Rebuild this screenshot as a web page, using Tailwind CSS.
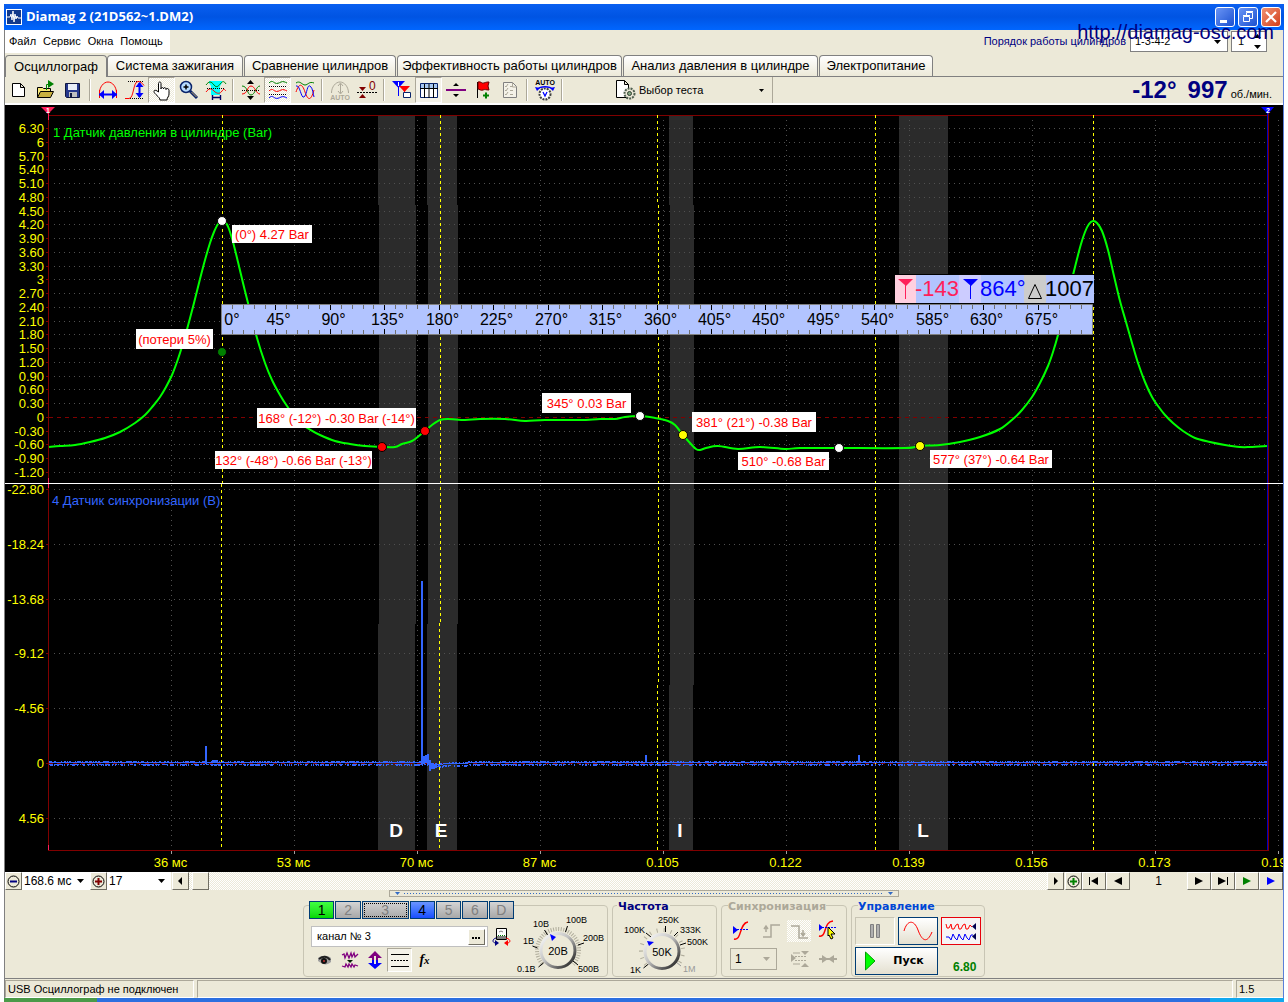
<!DOCTYPE html>
<html lang="ru">
<head>
<meta charset="utf-8">
<title>Diamag 2</title>
<script src="https://cdn.jsdelivr.net/npm/@tailwindcss/browser@4"></script>
</head>
<body class="bg-white px-1 pt-1 font-['Liberation_Sans',Arial,sans-serif] text-black overflow-x-hidden">
<div class="relative">

<!-- Title bar -->
<header class="flex h-[26px] items-center bg-linear-to-b from-[#0a5ff0] via-[#0054e3] to-[#0066ff] pl-0.5 pr-[3px]">
  <svg class="size-4" viewBox="0 0 16 16"><rect width="16" height="16" fill="#fff"/><rect x="1" y="1" width="14" height="14" fill="#123a8c"/><path d="M1 8h3l1-3 1 6 1-9 1 11 1-8 1 5 1-3 1 2h3" fill="none" stroke="#fff"/></svg>
  <h1 class="ml-1 flex-1 font-['Open_Sans','Noto_Sans',sans-serif] text-[13px] font-bold text-white">Diamag 2 (21D562~1.DM2)</h1>
  <div class="flex gap-[3px]">
    <button aria-label="Свернуть" class="size-5 rounded-[3px] border border-white bg-linear-to-br from-[#6a94f5] to-[#1a4fd0]"><svg viewBox="0 0 18 18"><path d="M4 12h7v3H4z" fill="#fff"/></svg></button>
    <button aria-label="Восстановить" class="size-5 rounded-[3px] border border-white bg-linear-to-br from-[#6a94f5] to-[#1a4fd0]"><svg viewBox="0 0 18 18" fill="none" stroke="#fff"><path d="M4.500 8.500h6v5h-6zM4 7.500h7M7.500 7V4.500h6v6H11M7 3.500h7"/></svg></button>
    <button aria-label="Закрыть" class="size-5 rounded-[3px] border border-white bg-linear-to-br from-[#f09070] to-[#d23c14]"><svg viewBox="0 0 18 18"><path d="M4 4l10 10M14 4L4 14" stroke="#fff" stroke-width="2.200"/></svg></button>
  </div>
</header>
<a href="#" class="absolute right-[10px] top-4 z-10 text-xl leading-6 text-[#000080]">http://diamag-osc.com</a>

<div class="border-x border-l-[#808080] border-r-[#5a7fd8] bg-[#ece9d8]">
<!-- Menu row -->
<div class="flex h-[25px] items-start justify-between">
  <nav class="flex h-[23px] w-[165px] items-center gap-[7px] bg-white pl-1 text-[11px]">
    <a href="#">Файл</a><a href="#">Сервис</a><a href="#">Окна</a><a href="#">Помощь</a>
  </nav>
  <div class="flex items-center pr-4 pt-px text-[11px]">
    <label for="order" class="mr-1 text-[#000080]">Порядок работы цилиндров</label>
    <span class="grid h-[21px] w-[98px] border border-[#808080] bg-white">
      <select id="order" class="appearance-none px-1 [grid-area:1/1]"><option>1-3-4-2</option></select>
      <svg class="pointer-events-none mr-1.5 h-1 w-[7px] self-center justify-self-end [grid-area:1/1]" viewBox="0 0 7 4"><path d="M0 0h7L3.500 4z"/></svg>
    </span>
    <span class="ml-[3px] flex h-[21px] w-9 items-center border border-[#808080] bg-white pl-1.5">
      <input aria-label="Цилиндр" value="1" class="w-3">
      <svg class="ml-1 h-[17px] w-[7px]" viewBox="0 0 7 17"><path d="M0 5h7L3.500 1zM0 12h7L3.500 16z"/></svg>
    </span>
  </div>
</div>

<!-- Tabs -->
<div role="tablist" class="flex h-[21px] text-[13px] leading-5">
  <button role="tab" aria-selected="true" class="z-10 -mb-px w-[102px] rounded-t border border-b-0 border-[#808080] bg-[#ece9d8]">Осциллограф</button>
  <button role="tab" class="w-[136px] rounded-t border border-b-0 border-[#808080] bg-linear-to-b from-white to-[#ece9d8]">Система зажигания</button>
  <button role="tab" class="ml-px w-[152px] rounded-t border border-b-0 border-[#808080] bg-linear-to-b from-white to-[#ece9d8]">Сравнение цилиндров</button>
  <button role="tab" class="ml-px w-[225px] rounded-t border border-b-0 border-[#808080] bg-linear-to-b from-white to-[#ece9d8]">Эффективность работы цилиндров</button>
  <button role="tab" class="ml-px w-[195px] rounded-t border border-b-0 border-[#808080] bg-linear-to-b from-white to-[#ece9d8]">Анализ давления в цилиндре</button>
  <button role="tab" class="ml-px w-[114px] rounded-t border border-b-0 border-[#808080] bg-linear-to-b from-white to-[#ece9d8]">Электропитание</button>
</div>

<!-- Toolbar -->
<div class="flex h-[29px] items-center border-b-2 border-t border-b-white border-t-[#808080]">
  <div class="flex items-center [&_svg]:mx-auto [&_svg]:size-6">
  <button aria-label="Новый" class="h-[26px] w-[27px]"><svg viewBox="0 0 24 24"><path d="M5.500 5.500h8l4 4v9h-12zM13.500 5.500v4h4" fill="#fff" stroke="#000"/></svg></button>
  <button aria-label="Открыть" class="h-[26px] w-[27px]"><svg viewBox="0 0 24 24"><path d="M3.500 19.500v-10h5l1 1h7v3" fill="#f8e878" stroke="#000"/><path d="M3.500 19.500l3-6h13l-3 6z" fill="#c8b040" stroke="#000"/><path d="M14 2v8l6-4z" fill="#008000"/><path d="M12.500 12V6.500H14" fill="none" stroke="#008000"/></svg></button>
  <button aria-label="Сохранить" class="h-[26px] w-[27px]"><svg viewBox="0 0 24 24"><path d="M4.500 5.500h14v14h-13l-1-1z" fill="#26388c" stroke="#101840"/><path d="M7 6h9v6H7z" fill="#e8eef8"/><path d="M8 14h8v5H8z" fill="#c0c0c0"/><path d="M9 15h2v4H9z" fill="#101840"/></svg></button>
  <i class="mx-[3px] h-[22px] w-0.5 border-l border-[#aca899] bg-white"></i>
  <button aria-label="Период" class="h-[26px] w-[27px]"><svg viewBox="0 0 24 24" fill="none"><path d="M3.500 15c0-6 4-11 8.500-11s8.500 5 8.500 11" stroke="red"/><path d="M3.500 12v8M20.500 12v8" stroke="red"/><path d="M3 16.500h18" stroke="#00f" stroke-width="2"/><path d="M8 12v9l-5-4.500zM16 12v9l5-4.500z" fill="#00f"/></svg></button>
  <button aria-label="Размах" class="h-[26px] w-[27px]"><svg viewBox="0 0 24 24" fill="none"><path d="M5 3.500h16M5 20.500h16" stroke="#000" stroke-dasharray="1 1"/><path d="M2 20.500h4c5 0 4-17 9-17 2 0 4 1 6 4" stroke="red"/><path d="M16.500 5v14" stroke="#00f" stroke-width="2"/><path d="M12.500 9l4-5 4 5zM12.500 15l4 5 4-5z" fill="#00f"/></svg></button>
  <button aria-label="Рука" class="h-[26px] w-[27px] border border-[#aca899] border-b-white border-r-white bg-[repeating-conic-gradient(#fff_0_25%,#ece9d8_0_50%)] bg-[length:2px_2px]"><svg viewBox="0 0 24 24"><path d="M8.500 14V5.500c0-2 2.500-2 2.500 0V11c0-2 2.500-2 2.500 0 0-2 2.500-2 2.500 .500 0-1.500 3-1.500 3 1V16c0 3-2 3-2 6H10c0-3-6-6-6-8.500 0-1.500 1.500-2 4.500.500z" fill="#fff" stroke="#000"/></svg></button>
  <button aria-label="Лупа" class="h-[26px] w-[27px]"><svg viewBox="0 0 24 24"><circle cx="9" cy="9" r="5.500" fill="#b8dcff" stroke="#0a246a" stroke-width="1.500"/><path d="M6.500 9h5M9 6.500v5" stroke="#000" stroke-width="1.500"/><path d="M13 13l7 7" stroke="#0a246a" stroke-width="3"/><path d="M14.500 14l5 5" stroke="#c8a868"/></svg></button>
  <button aria-label="Выделение" class="h-[26px] w-[27px]"><svg viewBox="0 0 24 24" fill="none"><path d="M5 3h13v2l-2 3v9H7V8L5 5z" fill="#0ff"/><path d="M2 7c3-4 5-4 8 0s5 0 7-2 3-2 5 1" stroke="green"/><path d="M2 14c3-4 5-4 8-1s6 3 8 0 3-1 4 0" stroke="red"/><path d="M3 10.500h18" stroke="#000" stroke-dasharray="1 1"/><path d="M8 19.500h9M8.500 17v5M16.500 17v5" stroke="#006" stroke-width="1.400"/></svg></button>
  <i class="mx-[3px] h-[22px] w-0.5 border-l border-[#aca899] bg-white"></i>
  <button aria-label="Совместить" class="h-[26px] w-[27px]"><svg viewBox="0 0 24 24" fill="none"><path d="M3 8c6 0 5 9 9 9s5-9 9-9" stroke="green"/><path d="M3 16c6 0 5-8 9-8s5 8 9 8" stroke="red"/><path d="M3 12.500h18" stroke="#000" stroke-dasharray="1 1"/><path d="M8 6h7l-3.500-4zM8 18h7l-3.500 4z" fill="#000"/></svg></button>
  <button aria-label="Разнести" class="h-[26px] w-[27px] border border-[#aca899] border-b-white border-r-white bg-[repeating-conic-gradient(#fff_0_25%,#ece9d8_0_50%)] bg-[length:2px_2px]"><svg viewBox="0 0 24 24" fill="none"><path d="M3 5c3-3 4-1 6 0s4 0 6-1 4 0 6 1" stroke="green"/><path d="M3 13c3-3 4-1 6 0s4 0 6-1 4 0 6 1" stroke="red"/><path d="M3 20c3-3 4-1 6 0s4 0 6-1 4 0 6 1" stroke="#00f"/><path d="M3 8.500h18M3 16.500h18" stroke="#000" stroke-dasharray="1 1"/></svg></button>
  <button aria-label="Наложить" class="h-[26px] w-[27px]"><svg viewBox="0 0 24 24" fill="none"><path d="M3 5c4-3 6 2 9 2s4-4 9-2" stroke="green"/><path d="M3 14c3-9 6-9 9 0s6 9 9-2" stroke="red"/><path d="M3 8c4-2 5 13 8 11s3-13 6-11 3 8 4 11" stroke="#00f"/></svg></button>
  <i class="mx-[3px] h-[22px] w-0.5 border-l border-[#aca899] bg-white"></i>
  <button aria-label="Авто" class="h-[26px] w-[27px]"><svg viewBox="0 0 24 24" fill="none" stroke="#aca899"><path d="M3.500 15c0-6 4-11 8.500-11s8.500 5 8.500 11M12.500 6v9M10 8l2.500-3L15 8M10 13l2.500 3 2.500-3"/><text x="12" y="22" text-anchor="middle" font-size="7" font-weight="bold" fill="#aca899" stroke="none">AUTO</text></svg></button>
  <button aria-label="Ноль" class="h-[26px] w-[27px]"><svg viewBox="0 0 24 24"><path d="M4 9h7l-3.500 4zM4 20h7l-3.500-4z" fill="#800000"/><path d="M2 14.500h20" stroke="#000" stroke-dasharray="2 1"/><text x="14" y="12" font-size="12" fill="#800000">0</text></svg></button>
  <i class="mx-[3px] h-[22px] w-0.5 border-l border-[#aca899] bg-white"></i>
  <button aria-label="Маркеры" class="h-[26px] w-[27px]"><svg viewBox="0 0 24 24"><path d="M2 3h13L8.500 10z" fill="#00f"/><path d="M8.500 8v10" stroke="#00f"/><path d="M9 8h11l-5.500 6z" fill="red"/><path d="M14.500 12v8" stroke="red"/><path d="M13.500 14.500h7v5h-7z" fill="#fff" stroke="#0a246a"/><path d="M8 4h1v4H8z" fill="#fff"/></svg></button>
  <button aria-label="Таблица" class="h-[26px] w-[27px] border border-[#aca899] border-b-white border-r-white bg-[#f4f2e8]"><svg viewBox="0 0 24 24"><path d="M3.500 5.500h17v14h-17z" fill="#fff" stroke="#0a246a"/><path d="M4 6h16v4H4z" fill="#a8c8f0"/><path d="M3 10.500h18M7.500 6v14M12 6v14M16.500 6v14" stroke="#000"/></svg></button>
  <button aria-label="Разделить" class="h-[26px] w-[27px]"><svg viewBox="0 0 24 24"><path d="M2 12h20" stroke="#800080" stroke-width="2"/><path d="M9 8h6l-3-3zM9 16h6l-3 3z"/></svg></button>
  <button aria-label="Флаг" class="h-[26px] w-[27px]"><svg viewBox="0 0 24 24"><path d="M6.500 4v16" stroke="#000"/><path d="M7 4c3-1 4 2 6 1s4-1 5-1l-1 4 1 4c-3 0-4-1-6 0s-4-1-5-1z" fill="red" stroke="#600"/><path d="M12 17.500h6M15 14.500v6" stroke="green" stroke-width="2"/></svg></button>
  <button aria-label="Список" class="h-[26px] w-[27px]"><svg viewBox="0 0 24 24"><path d="M5.500 4.500h9l4 4v11h-13z" fill="#f4f2e8" stroke="#808080"/><path d="M7 8l1 1 2-3M7 12l1 1 2-3M7 16l1 1 2-3M12 8.500h3M12 12.500h3M12 16.500h3M14.500 5v4h4" fill="none" stroke="#aca899"/></svg></button>
  <i class="mx-[3px] h-[22px] w-0.5 border-l border-[#aca899] bg-white"></i>
  <button aria-label="Автонапряжение" class="h-[26px] w-[27px]"><svg viewBox="0 0 24 24"><text x="12" y="7" text-anchor="middle" font-size="7" font-weight="bold">AUTO</text><circle cx="12" cy="16" r="5.500" fill="#fff" stroke="#404040" stroke-width="2" stroke-dasharray="2 1"/><path d="M5 11c2-3 12-3 14 0" fill="none" stroke="#00f" stroke-width="1.300"/><path d="M2 9l2 4 3-3zM22 9l-2 4-3-3z" fill="#00f"/><path d="M10 14l2 4 2-4" fill="none" stroke="#00f" stroke-width="1.300"/></svg></button>
  <i class="mx-[3px] h-[22px] w-0.5 border-l border-[#aca899] bg-white"></i>
  </div>
  <button class="ml-[49px] flex h-[26px] w-[158px] items-center border-r border-[#aca899] text-left text-[11px]">
    <svg class="size-6 shrink-0" viewBox="0 0 24 24"><path d="M1.500 2.500h8l4 4v13h-12zM9.500 2.500v4h4" fill="#fff" stroke="#000"/><circle cx="14.500" cy="15.500" r="5" fill="#ece9d8" stroke="#506050" stroke-width="2" stroke-dasharray="2 1"/><circle cx="14.500" cy="15.500" r="2" fill="#84a884" stroke="#304030"/></svg>
    <span class="flex-1">Выбор теста</span>
    <svg class="mr-2 h-[3px] w-[5px]" viewBox="0 0 5 3"><path d="M0 0h5L2.500 3z"/></svg>
  </button>
  <div class="ml-auto flex items-baseline pr-[11px] font-bold text-[#000080]">
    <output class="text-2xl leading-6">-12°</output>
    <output class="ml-[11px] text-2xl leading-6">997</output>
    <span class="ml-[3px] text-[11px] font-normal text-black">об./мин.</span>
  </div>
</div>

<!-- Oscillogram -->
<svg id="scope" class="block w-full bg-black" viewBox="5 105 1278 767" font-size="13">
  <g fill="#2b2b2b">
    <path d="M378 116h37v89h1v419h-1v226h-37V624h1V205h-1zM427 116h30v89h1v419h-1v226h-30V624h1V205h-1zM669 116h24v89h1v480h-1v165h-24V685h1V205h-1zM899 116h49v734h-49z"/>
  </g>
  <g id="grid" stroke="#505050"></g>
  <g stroke="#800000"><path d="M49 417.500H1267M49 763.500H1267" stroke-dasharray="4 4"/><path d="M48 115.500H1269M48 850.500H1269M48.500 110V851M1268.500 110V851" id="frame" stroke-width="1"/></g>
  <path d="M1267.500 112V850" stroke="#0000c0"/>
  <path d="M48.500 112v8M48.500 478v10M48.500 845v5" stroke="#ff1f5a"/>
  <path d="M41 107h14l-7 7z" fill="#ff1f5a"/><path d="M1261 107h13l-6 7z" fill="#00f"/>
  <text x="48" y="113" font-size="7" font-weight="bold" text-anchor="middle" fill="#fff">1</text>
  <text x="1268" y="113" font-size="7" font-weight="bold" text-anchor="middle" fill="#fff">2</text>
  <g font-size="19" font-weight="bold" fill="#fff" text-anchor="middle"><text x="396" y="837">D</text><text x="441" y="837">E</text><text x="680" y="837">I</text><text x="923" y="837">L</text></g>
  <path d="M222.500 115v368M221.500 484v366M440.500 115v508M439.500 623v227M658.500 205v480M657.500 115v90M657.500 685v165M875.500 115v735M1093.500 115v735" stroke="#ff0" stroke-dasharray="3 3"/>
  <path d="M5 483.500H1283" stroke="#fff"/>
  <g id="yaxis" fill="#ff0" text-anchor="end"></g>
  <g id="xaxis" fill="#ff0" text-anchor="middle"></g>
  <text x="53" y="137" fill="#0f0">1 Датчик давления в цилиндре (Bar)</text>
  <text x="52" y="505" fill="#36f">4 Датчик синхронизации (В)</text>
  <path id="sync" fill="none" stroke="#36f"/>
  <path id="pulses" fill="none" stroke="#36f" stroke-width="2"/>
  <path id="pressure" fill="none" stroke="#0f0" stroke-width="2"/>
  <g id="dots" stroke="#000"></g>
  <g id="notes" text-anchor="middle"></g>
  <path d="M221.500 304.500h871v30h-871z" fill="#b2c4ff" stroke="#808080"/>
  <path id="minor" stroke="#707070"/><path id="major" stroke="#000"/>
  <g id="degrees" font-size="16" text-anchor="middle"></g>
  <!-- Cursor readout -->
  <path d="M894 274h200v30H894z"/><path d="M895 275h199v28H895z" fill="#b2c4ff"/>
  <path d="M895 275h21v28h-21z" fill="#ffd0e0"/><path d="M959 275h22v28h-22z" fill="#ccf"/><path d="M1024 275h22v28h-22z" fill="#ccc"/>
  <path d="M898 279h15l-7 7z" fill="#ff1f5a"/><path d="M905.500 284v15" stroke="#ff1f5a"/>
  <path d="M963 279h15l-7 7z" fill="#00f"/><path d="M970.500 284v15" stroke="#00f"/>
  <path d="M1028.500 298.500l6.500-14 6.500 14z" fill="none" stroke="#000"/>
  <g font-size="22"><text x="915" y="296" fill="#ff1f5a">-143</text><text x="980" y="296" fill="#00f">864°</text><text x="1045" y="296">1007</text></g>
</svg>

<!-- Time scale and navigation -->
<div class="flex h-[18px] items-stretch text-xs [&_button]:border [&_button]:border-b-[#716f64] [&_button]:border-l-white [&_button]:border-r-[#716f64] [&_button]:border-t-white [&_button]:bg-[#ece9d8]">
  <button aria-label="Сжать" class="w-[17px]"><svg viewBox="0 0 15 15"><circle cx="7.500" cy="7.500" r="5.500" fill="none" stroke="#000"/><path d="M4 7.500h7" stroke="#000080" stroke-width="2"/></svg></button>
  <span class="grid w-[68px] bg-white"><select aria-label="Развёртка" class="appearance-none px-0.5 [grid-area:1/1]"><option>168.6 мс</option></select><svg class="pointer-events-none mr-1.5 h-1 w-[7px] self-center justify-self-end [grid-area:1/1]" viewBox="0 0 7 4"><path d="M0 0h7L3.500 4z"/></svg></span>
  <button aria-label="Растянуть" class="w-[17px]"><svg viewBox="0 0 15 15"><circle cx="7.500" cy="7.500" r="5.500" fill="none" stroke="#000"/><path d="M4 7.500h7M7.500 4v7" stroke="#800000" stroke-width="2"/></svg></button>
  <span class="grid w-[64px] bg-white"><select aria-label="Шаг" class="appearance-none px-0.5 [grid-area:1/1]"><option>17</option></select><svg class="pointer-events-none mr-1.5 h-1 w-[7px] self-center justify-self-end [grid-area:1/1]" viewBox="0 0 7 4"><path d="M0 0h7L3.500 4z"/></svg></span>
  <button aria-label="Влево" class="ml-px w-[17px]"><svg viewBox="0 0 15 15"><path d="M9 3v8L5 7z"/></svg></button>
  <div class="flex flex-1 bg-[repeating-conic-gradient(#fff_0_25%,#ece9d8_0_50%)] bg-[length:2px_2px] pl-[3px]"><button aria-label="Ползунок" class="w-[17px]"></button></div>
  <button aria-label="Вправо" class="w-[17px]"><svg viewBox="0 0 15 15"><path d="M6 3v8l4-4z"/></svg></button>
  <button aria-label="Добавить" class="ml-px w-[17px]"><svg viewBox="0 0 15 15"><circle cx="7.500" cy="7.500" r="5.500" fill="none" stroke="#000"/><path d="M4 7.500h7M7.500 4v7" stroke="green" stroke-width="2"/></svg></button>
  <button aria-label="В начало" class="w-6"><svg class="mx-auto size-4" viewBox="0 0 16 16"><path d="M3.500 4v8" stroke="#000"/><path d="M12 4v8L5 8z"/></svg></button>
  <button aria-label="Назад" class="w-6"><svg class="mx-auto size-4" viewBox="0 0 16 16"><path d="M12 4v8L4 8z"/></svg></button>
  <output class="w-[57px] text-center leading-[18px]">1</output>
  <button aria-label="Вперёд" class="w-6"><svg class="mx-auto size-4" viewBox="0 0 16 16"><path d="M4 4v8l8-4z"/></svg></button>
  <button aria-label="В конец" class="w-6"><svg class="mx-auto size-4" viewBox="0 0 16 16"><path d="M12.500 4v8" stroke="#000"/><path d="M3 4v8l8-4z"/></svg></button>
  <button aria-label="Пуск просмотра" class="w-6"><svg class="mx-auto size-4" viewBox="0 0 16 16"><path d="M4 4v8l8-4z" fill="green"/></svg></button>
  <button aria-label="Быстрый просмотр" class="w-6"><svg class="mx-auto size-4" viewBox="0 0 16 16"><path d="M4 4v8l8-4z" fill="#00f"/></svg></button>
</div>

<!-- Splitter -->
<div class="mx-auto flex h-[7px] w-[510px] items-center border border-[#aca899] px-[5px]">
  <svg class="h-[3px] w-[5px]" viewBox="0 0 5 3"><path d="M0 0h5L2.500 3z" fill="#316ac5"/></svg>
  <i class="mx-1 h-px flex-1 bg-[repeating-linear-gradient(90deg,#316ac5_0_1px,transparent_1px_3px)]"></i>
  <svg class="h-[3px] w-[5px]" viewBox="0 0 5 3"><path d="M0 0h5L2.500 3z" fill="#316ac5"/></svg>
</div>

<!-- Control groups -->
<div class="flex justify-center gap-1 border-b border-[#808080] pb-px pt-2">
  <fieldset class="flex h-[72px] w-[305px] rounded border border-[#c8c5b4]">
    <div class="w-[210px] pl-[5px]">
      <div class="-mt-[5px] flex gap-px bg-[#ece9d8] text-sm leading-4 text-[#808080] [&_button]:h-[18px] [&_button]:w-[26px] [&_button]:border [&_button]:border-[#003c74]">
        <button class="bg-linear-to-b from-[#40ff40] to-[#00d800] text-black">1</button>
        <button class="bg-linear-to-b from-[#d4d4d4] to-[#a8a8a8]">2</button>
        <button class="bg-linear-to-b from-[#d4d4d4] to-[#a8a8a8] !w-12 outline-1 -outline-offset-3 outline-dotted outline-black">3</button>
        <button class="bg-linear-to-b from-[#6a94ff] to-[#1a4cff] text-black">4</button>
        <button class="bg-linear-to-b from-[#d4d4d4] to-[#a8a8a8]">5</button>
        <button class="bg-linear-to-b from-[#d4d4d4] to-[#a8a8a8]">6</button>
        <button class="bg-linear-to-b from-[#d4d4d4] to-[#a8a8a8]">D</button>
      </div>
      <div class="mt-[7px] flex items-center pl-0.5">
        <div class="flex h-[21px] w-[177px] items-center border border-[#c0c0c0] bg-white p-0.5">
          <input aria-label="Имя канала" value="канал № 3" class="min-w-0 flex-1 pl-[3px] text-[11px]">
          <button aria-label="Выбрать" class="h-4 w-[17px] border border-b-[#716f64] border-l-white border-r-[#716f64] border-t-white bg-[#ece9d8]"><svg viewBox="0 0 15 14"><path d="M3 7h2v2H3zM6 7h2v2H6zM9 7h2v2H9z"/></svg></button>
        </div>
        <button aria-label="Переключить" class="ml-1"><svg class="h-5 w-[19px]" viewBox="0 0 19 20"><path d="M4.500 1.500h10v11h-10z" fill="#fff" stroke="#000"/><path d="M5 9h9v3H5z" fill="#808080"/><path d="M6 8.500h7" stroke="green" stroke-dasharray="1 1"/><path d="M7 5l2-1 2 1" fill="none" stroke="#808080"/><path d="M4 11c-4 1-4 5 0 5" fill="none" stroke="#000080"/><path d="M3 13l4 3-4 3z" fill="#000080"/><path d="M14 11c5 1 5 5 1 5" fill="none" stroke="red"/><path d="M16 13l-4 3 4 3z" fill="red"/></svg></button>
      </div>
      <div class="mt-px flex items-center pl-[3px] [&_button]:h-6 [&_button]:w-[25px] [&_svg]:mx-auto [&_svg]:size-5">
        <button aria-label="Показать"><svg viewBox="0 0 20 20"><path d="M3 8c3-3 10-3 13 0v4c-3 3-7 3-10 1l-3-2z" fill="#a0a0a0"/><path d="M4 9c4-3 8-3 11 1" fill="none" stroke="#202020" stroke-width="2"/><circle cx="9" cy="11" r="3" fill="#101010"/><circle cx="9" cy="11" r="1" fill="#c03030"/></svg></button>
        <button aria-label="Фильтр"><svg viewBox="0 0 20 20"><path d="M2 5l2-1 1 4 2-5 2 5 2-5 1 4 2-4 1 4 3-3M2 16l3 1 1-3 2 3 1-3 2 3 1-3 2 3 1-2 3 1" fill="none" stroke="#800080" stroke-width="1.300"/><path d="M7 10h6l-3 3z" fill="#002000"/></svg></button>
        <button aria-label="Инвертировать"><svg viewBox="0 0 20 20"><path d="M10 1l7 7h-4v3H7V8H3z" fill="#800080"/><path d="M10 19l7-6h-4v-3H7v3H3z" fill="#00f"/><path d="M10 6v8" stroke="#ece9d8" stroke-width="2"/></svg></button>
        <button aria-label="Линии" class="border border-[#aca899] border-b-white border-r-white bg-[#f4f2e8]"><svg viewBox="0 0 20 20"><path d="M1 4.500h18M1 16.500h18" stroke="#000"/><path d="M1 10.500h18" stroke="#000" stroke-dasharray="2 1"/></svg></button>
        <button class="font-['Liberation_Serif',serif] text-sm font-bold italic leading-4">f<span class="text-[11px]">x</span></button>
      </div>
    </div>
    <svg class="ml-auto h-[69px] w-[92px]" viewBox="514 906 92 69" font-size="9">
      <defs><linearGradient id="rim" x1="0" y1="0" x2="1" y2="1"><stop offset="0" stop-color="#fff"/><stop offset=".45" stop-color="#c0c0c0"/><stop offset="1" stop-color="#101010"/></linearGradient></defs>
      <circle cx="557" cy="950" r="21" fill="none" stroke="#b0ad9c" stroke-width="4" stroke-dasharray="1 1.500" transform="rotate(140 557 950)"/>
      <path d="M538 968l14-14h10l14 14v7h-38z" fill="#ece9d8"/>
      <path d="M537.500 967l5-4M531.500 946l5 2M543.500 930l3 5M566.500 926l-2 6M583 943l-6 2M577 965l-5-4" stroke="#000"/>
      <circle cx="557" cy="950.500" r="17" fill="#ece9d8" stroke="url(#rim)" stroke-width="3"/>
      <path d="M549 934l6 3-4 4z" fill="#00f"/>
      <text x="532" y="927">10В</text><text x="565" y="923">100В</text><text x="522" y="944">1В</text><text x="582" y="941">200В</text><text x="516" y="972">0.1В</text><text x="577" y="972">500В</text>
      <text x="557" y="955" font-size="11" text-anchor="middle">20В</text>
    </svg>
  </fieldset>

  <fieldset class="h-[72px] w-[105px] rounded border border-[#c8c5b4]">
    <legend class="float-left -mt-[5px] ml-1 h-[13px] bg-[#ece9d8] px-px font-['DejaVu_Sans',Verdana,sans-serif] text-[11px] font-bold leading-3 text-[#000080]">Частота</legend>
    <svg class="h-[62px] w-[103px]" viewBox="612 913 103 62" font-size="9">
      <circle cx="661" cy="950" r="21" fill="none" stroke="#b0ad9c" stroke-width="4" stroke-dasharray="1 6" transform="rotate(140 661 950)"/>
      <path d="M641 968l14-14h12l14 14v7h-40z" fill="#ece9d8"/>
      <path d="M642.500 967l5-4M645 932l5 4M664.500 925v6M677 931l-4 4M685 942l-6 2" stroke="#000"/><path d="M680 965l-5-4" stroke="#999"/>
      <circle cx="661" cy="950.500" r="17" fill="#ece9d8" stroke="url(#rim)" stroke-width="3"/>
      <path d="M646 940l7 1-5 4z" fill="#00f"/>
      <text x="657" y="922">250K</text><text x="623" y="932">100K</text><text x="679" y="932">333K</text><text x="686" y="944">500K</text><text x="629" y="972">1K</text><text x="682" y="971" fill="#999">1M</text>
      <text x="661" y="955" font-size="11" text-anchor="middle">50K</text>
    </svg>
  </fieldset>

  <fieldset class="h-[72px] w-[126px] rounded border border-[#c8c5b4]">
    <legend class="float-left -mt-[5px] ml-1.5 h-[13px] bg-[#ece9d8] font-['DejaVu_Sans',Verdana,sans-serif] text-[11px] font-bold leading-3 text-[#aca899]">Синхронизация</legend>
    <div class="clear-both grid grid-cols-4 gap-y-1.5 pl-1.5 pr-1 pt-1.5 [&_svg]:mx-auto [&_svg]:h-[22px] [&_svg]:w-6">
      <button aria-label="Уровень"><svg viewBox="0 0 24 22" fill="none"><path d="M4 19c8 2 5-16 14-17" stroke="red" stroke-width="1.500"/><path d="M4 9.500h15" stroke="#00f" stroke-dasharray="2 1"/><path d="M3 6v8l5-4z" fill="#00f"/></svg></button>
      <button aria-label="Фронт"><svg viewBox="0 0 24 22" fill="none" stroke="#aca899" stroke-width="1.500"><path d="M4 17h8V5h9M7 12V7M5 9l2-3 2 3"/></svg></button>
      <button aria-label="Спад"><svg class="bg-[repeating-conic-gradient(#fff_0_25%,#ece9d8_0_50%)] bg-[length:2px_2px]" viewBox="0 0 24 22" fill="none" stroke="#aca899" stroke-width="1.500"><path d="M4 6h8v12h9M16 10v5M14 13l2 3 2-3"/></svg></button>
      <button aria-label="Курсор синхронизации"><svg viewBox="0 0 24 22" fill="none"><path d="M3 16c8 2 4-14 14-15" stroke="red" stroke-width="1.500"/><path d="M3 7.500h18" stroke="#00f" stroke-dasharray="2 1"/><path d="M3 4v7l4-3.500z" fill="#00f"/><path d="M12 7l7 7h-4l2 4-2 1-2-4-1 1z" fill="#ff0" stroke="#000"/></svg></button>
      <span class="col-span-2 ml-0.5 grid h-[22px] w-[47px] border border-[#aca899]"><select aria-label="Канал синхронизации" class="appearance-none pl-1 text-xs [grid-area:1/1]"><option>1</option></select><svg class="pointer-events-none !mr-1.5 !h-1 !w-[7px] self-center justify-self-end [grid-area:1/1]" viewBox="0 0 7 4"><path d="M0 0h7L3.500 4z" fill="#aca899"/></svg></span>
      <button aria-label="Диапазон"><svg viewBox="0 0 24 22"><path d="M4 6v8l5-4zM14 3h8l-4 4zM14 19h8l-4-4z" fill="#aca899"/><path d="M8 8.500h11M8 12.500h11" stroke="#aca899" stroke-dasharray="2 1"/><path d="M6 5h7M6 16h7" stroke="#aca899"/></svg></button>
      <button aria-label="Сжать интервал"><svg viewBox="0 0 24 22"><path d="M6 7v8l6-4zM18 7v8l-6-4z" fill="#aca899"/><path d="M3 11h18" stroke="#aca899" stroke-width="2"/></svg></button>
    </div>
  </fieldset>

  <fieldset class="h-[72px] w-[134px] rounded border border-[#c8c5b4]">
    <legend class="float-left -mt-[5px] ml-1.5 h-[13px] bg-[#ece9d8] font-['DejaVu_Sans',Verdana,sans-serif] text-[11px] font-bold leading-3 text-[#0046d5]">Управление</legend>
    <div class="clear-both flex flex-wrap gap-x-[3px] gap-y-0.5 pl-[3px] pt-[3px]">
      <button aria-label="Пауза" class="h-7 w-10 border border-[#c8c5b4] border-b-white border-r-white"><svg class="mx-auto h-5 w-4" viewBox="0 0 16 20"><path d="M3.500 3.500h3v13h-3zM9.500 3.500h3v13h-3z" fill="#b0b0b0" stroke="#808080"/></svg></button>
      <button aria-label="Синус" class="h-7 w-10 border border-[#003c74] bg-linear-to-b from-white to-[#e4e0d0]"><svg class="h-[26px] w-[38px]" viewBox="0 0 38 26"><path d="M5 13C8 2 15 1 19 12s9 14 14 2" fill="none" stroke="red"/></svg></button>
      <button aria-label="Осциллограммы" class="h-7 w-10 border border-red-600 bg-[#f6f4f4]"><svg class="h-[26px] w-[38px]" viewBox="0 0 38 26" fill="none"><path d="M4 6l1 4h2l2-4 1 5h2l2-4 2-1 1 5h2l2-4 2-1 1 5h2l2-4 2 2" stroke="red"/><path d="M4 19h3l2 3 2-6 2 4 2 2 2-6 2 4 2 2 2-6 2 4 2 2 2-5h2" stroke="#00f"/><path d="M34 5v7l-4-3.500zM34 15v7l-4-3.500z" fill="#000050"/></svg></button>
      <button class="flex h-7 w-[83px] items-center border border-[#003c74] bg-linear-to-b from-white to-[#e4e0d0] pl-2 font-['DejaVu_Sans',Verdana,sans-serif] text-[11px] font-bold"><svg class="h-5 w-3" viewBox="0 0 12 20"><path d="M1.500 1v18L11 10z" fill="#0f0" stroke="#00a000"/></svg><span class="flex-1 pl-1">Пуск</span></button>
      <output class="self-end pl-3 text-xs font-bold leading-4 text-[#008000]">6.80</output>
    </div>
  </fieldset>
</div>

<!-- Status bar -->
<footer class="flex gap-[3px] pt-px text-[11px] leading-4">
  <div class="h-[18px] w-[189px] border border-b-white border-l-[#aca899] border-r-white border-t-[#aca899] pl-0.5">USB Осциллограф не подключен</div>
  <div class="flex-1 border border-b-white border-l-[#aca899] border-r-white border-t-[#aca899]"></div>
  <div class="w-[47px] border border-b-white border-l-[#aca899] border-r-0 border-t-[#aca899] pl-0.5">1.5</div>
</footer>
</div>
<div class="flex h-1 bg-[#2c6fe0]"><i class="w-[93px] bg-[#4a9a48]"></i><i class="ml-auto w-[74px] bg-[#12a8ee]"></i></div>
</div>

<script>
const NS = 'http://www.w3.org/2000/svg';
const $ = id => document.getElementById(id);
function add(parent, tag, attrs, text) {
  const el = document.createElementNS(NS, tag);
  for (const k in attrs) el.setAttribute(k, attrs[k]);
  if (text !== undefined) el.textContent = text;
  parent.appendChild(el);
}

// Axis labels and dotted grid
const hl = [], ticks = [];
for (let i = 0; i < 26; i++) {
  const v = 6.3 - 0.3 * i, y = Math.round(128 + i * 13.76);
  const label = Math.abs(v - Math.round(v)) < 0.01 && Math.round(v) % 3 === 0 ? String(Math.round(v) + 0) : v.toFixed(2);
  add($('yaxis'), 'text', {x: 44, y: y + 5}, label);
  if (label !== '0') hl.push(y + .5);
  ticks.push(y + .5);
}
[['-22.80', 489], ['-18.24', 544], ['-13.68', 599], ['-9.12', 653], ['-4.56', 708], ['0', 763], ['4.56', 818]].forEach(([t, y]) => {
  add($('yaxis'), 'text', {x: 44, y: y + 5}, t);
  if (t !== '0') hl.push(y + .5);
  ticks.push(y + .5);
});
add($('grid'), 'path', {d: hl.map(y => `M54 ${y}H1267`).join(''), 'stroke-dasharray': '1 4'});
const names = ['36 мс', '53 мс', '70 мс', '87 мс', '0.105', '0.122', '0.139', '0.156', '0.173', '0.190'];
const xs = names.map((n, i) => 171.5 + 123 * i);
add($('grid'), 'path', {d: xs.map(x => `M${x} 120V850`).join(''), 'stroke-dasharray': '1 4'});
add($('grid'), 'path', {d: xs.map(x => `M${x} 851v3`).join(''), stroke: '#a0a0a0'});
$('frame').setAttribute('d', $('frame').getAttribute('d') + ticks.map(y => `M46 ${y}h3`).join(''));
names.forEach((n, i) => add($('xaxis'), 'text', {x: xs[i] - 1, y: 867}, n));

// Pressure trace, smoothed through its samples
const p = [49,447,60,446,75,445,90,442,105,438,120,432,135,423,145,415,153,406,160,397,166,387,172,375,178,359,184,340,189,322,194,303,200,279,205,260,210,243,214,232,218,224,222,221,226,223,229,229,233,242,238,262,243,283,248,303,257,338,265,363,272,380,280,395,287,406,296,418,303,425,309,429,320,435,335,441,350,444,365,446,382,447,395,447,402,444,412,441,420,435,425,431,432,425,440,420,448,419,465,420,480,419,505,419,525,421,545,420,580,420,600,419,615,419,625,417,640,416,655,418,668,421,675,425,683,435,690,443,696,449,700,450,706,448,718,446,738,449,760,447,785,449,800,448,839,448,905,448,919,446,940,445,960,442,980,437,1000,429,1013,419,1022,410,1032,397,1040,383,1048,366,1053,352,1058,335,1066,303,1073,275,1077,259,1081,244,1085,232,1089,224,1093,221,1097,223,1102,231,1108,250,1114,276,1120,301,1126,322,1132,343,1138,363,1145,382,1152,397,1158,406,1165,415,1173,423,1183,431,1195,438,1210,442,1225,445,1240,447,1250,447,1267,446];
const pt = [];
for (let i = 0; i < p.length; i += 2) pt.push([p[i], p[i + 1]]);
let d = `M${pt[0]}`;
for (let i = 0; i < pt.length - 1; i++) {
  const a = pt[i - 1] || pt[i], b = pt[i], c = pt[i + 1], e = pt[i + 2] || c;
  d += `C${b[0] + (c[0] - a[0]) / 6} ${b[1] + (c[1] - a[1]) / 6} ${c[0] - (e[0] - b[0]) / 6} ${c[1] - (e[1] - b[1]) / 6} ${c}`;
}
$('pressure').setAttribute('d', d);

// Sync sensor trace: per-column noise around zero, then the pulses
let seed = 7, s = '';
const rnd = () => (seed = (seed * 16807) % 2147483647) / 2147483647;
for (let x = 49; x < 1267; x++) {
  const off = x > 429 && x < 480 ? Math.round(2 * (480 - x) / 50) : 0;
  const top = 761 + off + Math.round(rnd());
  s += `M${x + .5} ${top}V${763 + off}`;
  if (rnd() > .3) s += `M${x + .5} ${764 + off}V${765 + off + Math.round(rnd())}`;
}
$('sync').setAttribute('d', s);
$('pulses').setAttribute('d', 'M206 746V764M212 761h6M422 581V765M424 756v8M426 755v8M428 754v11M430 760V771M432 763v6M434 764v5M436 764v4M439 764v3M646 755v8M859 755v8');

// Ruler, 720 degrees across 871 px
let major = '', minor = '';
for (let i = 1; i < 80; i++) {
  const x = Math.round(221 + i * 871 / 80) + .5;
  if (i % 5) minor += `M${x} 305v4M${x} 330v4`;
  else {
    major += `M${x} 305v5M${x} 329v5`;
    add($('degrees'), 'text', {x: x + 3, y: 325}, i * 9 + '°');
  }
}
add($('degrees'), 'text', {x: 232, y: 325}, '0°');
$('major').setAttribute('d', major);
$('minor').setAttribute('d', minor);

// Key points and their callouts
[[222,221,'#fff'],[222,352,'#008000'],[382,447,'red'],[425,431,'red'],[640,416,'#fff'],[683,435,'#ff0'],[839,448,'#fff'],[920,446,'#ff0']]
  .forEach(([cx, cy, fill]) => add($('dots'), 'circle', {cx, cy, r: 4.5, fill}));
[[232,225,80,18,'(0°) 4.27 Bar'],[136,329,77,20,'(потери 5%)'],[257,408,159,20,'168° (-12°) -0.30 Bar (-14°)'],[215,451,157,18,'132° (-48°) -0.66 Bar (-13°)'],[542,393,89,20,'345° 0.03 Bar'],[692,412,124,20,'381° (21°) -0.38 Bar'],[738,452,91,18,'510° -0.68 Bar'],[930,450,122,18,'577° (37°) -0.64 Bar']]
  .forEach(([x, y, width, height, t]) => {
    add($('notes'), 'rect', {x, y, width, height, fill: '#fff'});
    add($('notes'), 'text', {x: x + width / 2, y: y + height / 2 + 5, fill: '#f00'}, t);
  });
</script>
</body>
</html>
